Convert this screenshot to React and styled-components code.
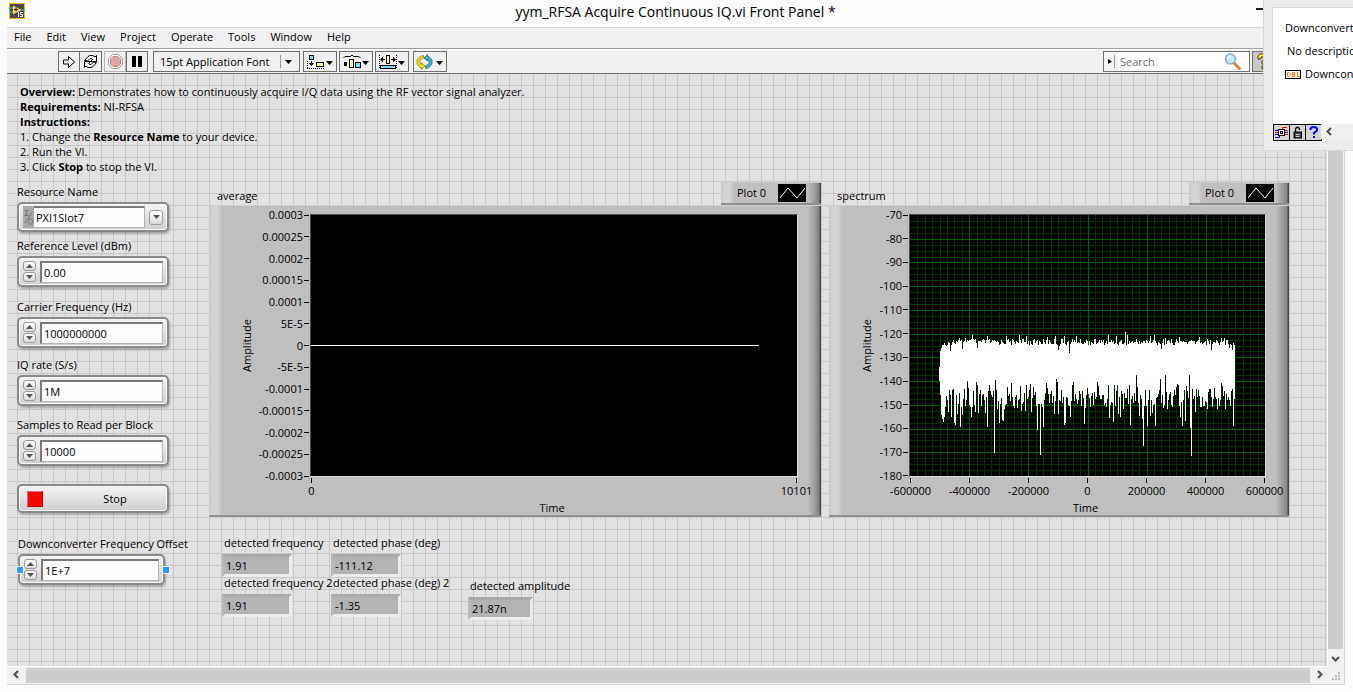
import React, { useState } from "react";
import styled, { createGlobalStyle, css } from "styled-components";

const GlobalStyle = createGlobalStyle`
  * { box-sizing: border-box; }
  body {
    margin: 0;
    background: #fbfbfb;
    color: #000;
    font-family: "Open Sans", "Noto Sans", sans-serif;
    font-size: 11px;
    line-height: 16px;
  }
  button, input, select { font: inherit; color: inherit; margin: 0; padding: 0; }
`;

const Page = styled.div`
  position: relative;
  display: flex;
  flex-direction: column;
  min-height: 100vh;
  overflow: hidden;
`;

const TitleBar = styled.header`
  display: flex;
  align-items: flex-start;
  height: 27px;
  padding: 3px 80px 0 9px;

  h1 {
    flex: 1;
    margin: 0;
    padding-left: 70px;
    text-align: center;
    font-size: 14px;
    line-height: 18px;
    font-weight: 400;
  }
`;

const MinimizeButton = styled.button`
  width: 17px;
  height: 7px;
  border: 0;
  border-bottom: 2px solid #1a1a1a;
  background: none;
`;

const Frame = styled.div`
  flex: 1;
  display: flex;
  flex-direction: column;
  margin: 0 8px 7px 7px;
  border: 1px solid #d5d5d5;
  border-left: 0;
`;

const MenuBar = styled.nav`
  display: flex;
  gap: 15px;
  height: 21px;
  padding: 1px 7px 0;
  background: #f0f0f0;
  border-bottom: 1px solid #a0a0a0;

  a { color: #000; text-decoration: none; }
`;

const ToolBar = styled.div`
  display: flex;
  height: 25px;
  padding: 1px 70px 1px 51px;
  border-top: 1px solid #fff;
  border-bottom: 1px solid #6a6a6a;
  background: #f0f0f0;
`;

const ToolButton = styled.button`
  display: flex;
  align-items: center;
  justify-content: center;
  width: ${(p) => p.$width || 22}px;
  height: 21px;
  margin-left: ${(p) => p.$gap || 0}px;
  border: 1px solid ${(p) => (p.disabled ? "#b4b4b4" : "#6f6f6f")};
  background: ${(p) => (p.$active ? "#c8c8c8" : "#f0f0f0")};

  & + &:not(:disabled) { border-left-width: ${(p) => (p.$gap ? 1 : 0)}px; }
`;

const FontPicker = styled.div`
  display: flex;
  align-items: center;
  width: 147px;
  height: 21px;
  margin-left: 5px;
  padding-left: 6px;
  border: 1px solid #6f6f6f;
  background: #f0f0f0;

  select {
    flex: 1;
    border: 0;
    appearance: none;
    background: none;
  }
  svg { margin-right: 5px; }
`;

const SearchBox = styled.div`
  display: flex;
  align-items: center;
  width: 147px;
  height: 21px;
  margin: 0 2px 0 auto;
  padding-right: 8px;
  border: 1px solid #6f6f6f;
  background: #fff;

  input {
    flex: 1;
    min-width: 0;
    border: 0;
    padding-left: 2px;
    background: none;
    outline: none;
  }
  input::placeholder { color: #6d6d6d; opacity: 1; }
`;

const ScrollArea = styled.div`
  flex: 1;
  display: flex;
`;

// 12px alignment grid of the front panel
const Panel = styled.main`
  flex: 1;
  min-width: 0;
  padding: 10px 38px 0 10px;
  border-right: 1px solid #fff;
  border-bottom: 1px solid #fff;
  background-color: #e2e2e2;
  background-image: linear-gradient(#c8c8c8 1px, transparent 1px),
    linear-gradient(to right, #c8c8c8 1px, transparent 1px);
  background-size: 12px 12px;
  background-position: 10px 11px;
`;

const VScroll = styled.div`
  display: flex;
  flex-direction: column;
  width: 16px;
  padding-right: 1px;
  background: #f0f0f0;
`;

const HScroll = styled.div`
  display: flex;
  height: 17px;
  background: #f0f0f0;
`;

const Thumb = styled.div`
  flex: 1;
  margin: ${(p) => (p.$vertical ? "17px 0 0" : "1px 0 1px")};
  background: #cdcdcd;
`;

const ScrollButton = styled.button`
  display: flex;
  align-items: center;
  justify-content: center;
  width: ${(p) => p.$width || 15}px;
  height: ${(p) => p.$height || 15}px;
  border: 0;
  background: #f0f0f0;
`;

const Overview = styled.section`
  padding-left: 3px;
  line-height: 15px;

  p, ol { margin: 0; padding: 0; }
  ol { list-style-position: inside; }
  li::marker { content: counter(list-item) ". "; }
`;

const MainRow = styled.div`
  display: flex;
  gap: 8px;
  margin-top: 8px;
`;

const Controls = styled.div`
  width: 184px;
  flex: none;
  padding-top: 2px;
`;

const Field = styled.div`
  margin-bottom: ${(p) => p.$space || 0}px;
  label { display: block; margin-bottom: 2px; white-space: nowrap; }
`;

const bevel = css`
  border: 2px solid #8a8a8a;
  border-radius: 5px;
  background: linear-gradient(#f4f4f4, #cfcfcf);
  box-shadow: inset 0 0 0 1px #f6f6f6, 1px 2px 2px rgba(0, 0, 0, 0.25);
`;

const Shell = styled.div`
  ${bevel}
  position: relative;
  display: flex;
  align-items: center;
  gap: 4px;
  width: ${(p) => p.$width || 152}px;
  height: ${(p) => p.$height || 31}px;
  padding: 0 4px;
`;

const entry = css`
  flex: 1;
  min-width: 0;
  height: 22px;
  padding: 0 2px;
  border: 1px solid #b4b4b4;
  border-top: 2px solid #7a7a7a;
  border-left: 2px solid #7a7a7a;
  border-radius: 0;
  background: #fcfcfc;
  outline: none;
`;

const Entry = styled.input`${entry}`;

const Resource = styled.div`
  display: flex;
  flex: 1;

  svg { flex: none; }
  select {
    ${entry}
    appearance: none;
    border-left-width: 0;
    border-left-style: none;
  }
`;

const Spinner = styled.div`
  display: flex;
  flex-direction: column;
  gap: 1px;
`;

const SmallButton = styled.button`
  display: flex;
  align-items: center;
  justify-content: center;
  width: ${(p) => p.$width || 13}px;
  height: ${(p) => p.$height || 10}px;
  border: 1px solid #9a9a9a;
  border-radius: 3px;
  background: linear-gradient(#fff, #dcdcdc);
`;

const StopButton = styled.button`
  ${bevel}
  display: flex;
  align-items: center;
  width: 152px;
  height: 29px;
  padding: 0 8px;
  text-align: center;

  i { width: 16px; height: 16px; background: #f00; border: 1px solid #c00000; border-top-color: #ff5c8a; border-left-color: #ff5c8a; }
  span { flex: 1; padding-left: 28px; }
`;

const Handle = styled.span`
  position: absolute;
  top: 10px;
  ${(p) => (p.$right ? "right: -7px;" : "left: -4px;")}
  width: 8px;
  height: 8px;
  border: 1px solid #fff;
  background: #3399ff;
`;

const Graph = styled.section`
  flex: ${(p) => p.$grow} 1 0;
  min-width: 0;
`;

const GraphHead = styled.div`
  display: flex;
  align-items: flex-end;
  justify-content: space-between;
  height: 23px;

  h2 { margin: 0; padding: 0 0 1px 8px; font-size: 11px; font-weight: 400; }
`;

const raised = css`
  border-top: 1px solid #d0d0d0;
  border-bottom: 2px solid #909090;
  background: linear-gradient(to right, #c8c8c8 0, #d4d4d4 3px, #d4d4d4 9px, #bfbfbf 13px, #bfbfbf calc(100% - 13px), #858585 calc(100% - 2px), #484848 calc(100% - 1px));
`;

const Legend = styled.div`
  ${raised}
  display: flex;
  align-items: center;
  justify-content: space-between;
  width: 100px;
  height: 23px;
  padding: 0 15px 0 16px;
`;

const GraphBody = styled.div`
  ${raised}
  display: grid;
  grid-template-columns: 16px ${(p) => p.$axis}px 1fr;
  height: 312px;
  padding: 8px 23px 0 30px;
`;

const Amplitude = styled.div`
  writing-mode: vertical-rl;
  transform: rotate(180deg);
  text-align: center;
`;

const YAxis = styled.div`
  display: flex;
  flex-direction: column;
  justify-content: space-between;
  margin: -7px 1px -7px 0;

  span { display: flex; align-items: center; justify-content: flex-end; gap: 1px; white-space: nowrap; }
  span::after { content: ""; width: 5px; height: 1px; background: #000; }
`;

const Plot = styled.div`
  height: 263px;
  border: 1px solid #ddd;
  border-top-color: #4d4d4d;
  border-left-color: #4d4d4d;
  background: #000;

  svg { display: block; width: 100%; height: 100%; }
`;

const XAxis = styled.div`
  grid-column: 3;
  display: flex;
  justify-content: space-between;
  padding: 1px 1px 0;
  height: 23px;

  span { display: flex; flex-direction: column; align-items: center; width: 1px; white-space: nowrap; }
  span::before { content: ""; flex: none; width: 1px; height: 5px; background: #000; }
`;

const TimeLabel = styled.div`
  grid-column: 3;
  padding-right: 4px;
  text-align: center;
`;

const BottomRow = styled.div`
  display: flex;
  margin-top: 18px;
`;

const OffsetCell = styled.div`
  flex: none;
  width: 205px;
  padding: 1px 0 0 1px;
`;

const Readouts = styled.div`
  display: flex;
  flex-direction: column;
  width: ${(p) => p.$width}px;
  padding-top: ${(p) => p.$drop || 0}px;
`;

const Readout = styled.div`
  margin-bottom: -2px;

  label { position: relative; display: block; padding-left: 2px; margin-bottom: 3px; white-space: nowrap; }
  output {
    display: block;
    width: ${(p) => p.$width || 70}px;
    height: 23px;
    padding: 1px;
    border: 3px solid #ececec;
    border-top-color: #aaa;
    border-left-color: #b8b8b8;
    background: #b3b3b3;
  }
`;

const HelpWindow = styled.aside`
  position: absolute;
  top: 0;
  right: 0;
  width: 90px;
  height: 151px;
  padding: 7px 0 8px 8px;
  overflow: hidden;
  border-left: 1px solid #d8d8d8;
  border-bottom: 1px solid #d8d8d8;
  background: #ebebeb;
  white-space: nowrap;
`;

const HelpBody = styled.div`
  height: 117px;
  padding: 12px 0 0 12px;
  border-top: 1px solid #d8d8d8;
  border-left: 1px solid #d8d8d8;
  background: #fff;

  p { display: flex; align-items: center; gap: 4px; margin: 0 0 7px; }
  p:nth-child(2) { padding-left: 2px; }
  svg { flex: none; }
`;

const HelpFoot = styled.div`
  display: flex;
  padding-left: 1px;
  background: #f0f0f0;
`;

const HelpButton = styled.button`
  display: flex;
  align-items: center;
  justify-content: center;
  width: 17px;
  height: 17px;
  margin-right: -1px;
  border: 1px solid #000;
  background: #d4d4d4;
`;

const Caret = ({ up, size = 7, color = "#000" }) => (
  <svg width={size} height="4" viewBox="0 0 7 4">
    <path d={up ? "M0 4h7L3.5 0z" : "M0 0h7L3.5 4z"} fill={color} />
  </svg>
);

const chevrons = { left: "M6 1L2.500 4.500L6 8", right: "M3 1l3.500 3.500L3 8", down: "M1 3l3.500 3.500L8 3", up: "M1 6l3.500-3.500L8 6" };
const Chevron = ({ dir }) => (
  <svg width="9" height="9" viewBox="0 0 9 9">
    <path d={chevrons[dir]} fill="none" stroke="#505050" strokeWidth="2" />
  </svg>
);

const AppIcon = () => (
  <svg width="16" height="16" viewBox="0 0 16 16">
    <rect width="16" height="16" fill="#f5b800" />
    <rect x="1" y="1" width="14" height="14" fill="#4a4a4a" />
    <path d="M0 5h5M0 9h5M11 7h5" stroke="#3c9bd8" strokeWidth="1.500" />
    <path d="M4 2.500v9L12.500 7z" fill="#ffd84a" />
    <path d="M5 6.500h4M7 4.500v4" stroke="#222" />
    <path d="M9.500 9v5M14 9.500h-2.500v2h2v2h-2.500" stroke="#fff" fill="none" />
  </svg>
);

const RunIcon = () => (
  <svg width="14" height="14" viewBox="0 0 14 14">
    <path d="M1.500 5v4H6.500v3.500L12.500 7L6.500 1.500V5z" fill="#fff" stroke="#000" />
  </svg>
);

const LoopIcon = () => (
  <svg width="17" height="15" viewBox="0 0 17 15">
    <path d="M2.500 6.500L6 2.500L8 1.500h3L13 3l1.500-1.500v6h-6L10.500 5.500L9 4.500H8L5.500 7z" fill="#fff" stroke="#000" />
    <path d="M14.500 8.500L11 12.500L9 13.500H6L4 12l-1.500 1.500v-6h6L6.500 9.500L8 10.500h1L11.500 8z" fill="#fff" stroke="#000" />
  </svg>
);

const AbortIcon = () => (
  <svg width="15" height="15" viewBox="0 0 15 15">
    <path d="M4.500.5h6l4 4v6l-4 4h-6l-4-4v-6z" fill="#fff" stroke="#a0a0a0" />
    <path d="M5 2.500h5L12.500 5v5L10 12.500H5L2.500 10V5z" fill="#dda5a5" stroke="#c08a8a" />
  </svg>
);

const PauseIcon = () => (
  <svg width="10" height="11" viewBox="0 0 10 11">
    <path d="M0 0h4v11H0zM6 0h4v11H6z" />
  </svg>
);

const AlignIcon = () => (
  <svg width="28" height="16" viewBox="0 0 28 16">
    <rect x="3.500" y="1.500" width="4" height="4" fill="#7fdcf5" stroke="#000" />
    <path d="M3 9h5l-2.500 3zM5 7h1v3H5z" />
    <rect x="10.500" y="8.500" width="7" height="4" fill="#fff3a0" stroke="#000" />
    <path d="M1 14.500h18M1.500 7v7" stroke="#000" strokeDasharray="1 1" fill="none" />
    <path d="M20 7h7l-3.500 4z" />
  </svg>
);

const DistributeIcon = () => (
  <svg width="28" height="16" viewBox="0 0 28 16">
    <path d="M1.500 4l1.500-1.500h5.500L10 1l1.500 1.500H17L18.500 4" fill="none" stroke="#000" />
    <rect x="2" y="8" width="3" height="4" />
    <rect x="7.500" y="5.500" width="4" height="8" fill="#fff3a0" stroke="#000" />
    <rect x="13.500" y="8.500" width="5" height="5" fill="#7fdcf5" stroke="#000" />
    <path d="M20 7h7l-3.500 4z" />
  </svg>
);

const ResizeIcon = () => (
  <svg width="28" height="16" viewBox="0 0 28 16">
    <path d="M1.500 1v14M18.500 1v14" stroke="#000" strokeDasharray="1 1" />
    <path d="M2 5.500l3-3v2.500h2v1H5v2.500zM18 5.500l-3-3v2.500h-2v1h2v2.500z" />
    <rect x="8.500" y="1.500" width="3" height="8" fill="#fff3a0" stroke="#000" />
    <rect x="2.500" y="11.500" width="15" height="3" fill="#7fdcf5" stroke="#000" />
    <path d="M20 7h7l-3.500 4z" />
  </svg>
);

const ReorderIcon = () => (
  <svg width="28" height="16" viewBox="0 0 28 16">
    <path d="M7.500 1.500L4 2.500L1 6v4l3 3.500h1.500v2L9 12L5.500 9v2L4 9V6l3.500-2z" fill="#f0e020" stroke="#8a8a00" strokeWidth=".8" />
    <path d="M9.500 14.500l3.500-1l3-3.500V6l-3-3.500h-1.500v-2L8 4l3.500 3V5L13 7v3l-3.500 2z" fill="#3fb4d0" stroke="#1c6f88" strokeWidth=".8" />
    <path d="M20 7h7l-3.500 4z" />
  </svg>
);

const MagnifierIcon = () => (
  <svg width="17" height="17" viewBox="0 0 17 17">
    <path d="M10.500 10.500l5 5" stroke="#c98a4b" strokeWidth="3" strokeLinecap="round" />
    <circle cx="6.500" cy="6" r="5" fill="#c4e8fa" stroke="#8aa8bc" strokeWidth="1.500" />
    <path d="M3.500 5.500a3 3 0 0 1 3-2.500" stroke="#fff" strokeWidth="1.500" fill="none" />
  </svg>
);

const HelpIcon = () => (
  <svg width="14" height="17" viewBox="0 0 14 17">
    <path d="M2 6V3l2-2h6l2 2v4l-3 2v2H6V8l3-2V4H5v2zM6 13h3v3H6z" fill="#ffee20" stroke="#000" strokeWidth=".7" />
  </svg>
);

const IoGlyph = () => (
  <svg width="11" height="22" viewBox="0 0 11 22">
    <rect width="11" height="22" fill="#a9a9a9" />
    <path d="M1.500 4.500h4M3.500 4.500v5M1.500 9.500h4M9.500 6L2 17" stroke="#747474" fill="none" />
    <ellipse cx="7.500" cy="15.500" rx="2" ry="3" stroke="#747474" fill="none" />
  </svg>
);

const DblIcon = () => (
  <svg width="16" height="9" viewBox="0 0 16 9">
    <rect x=".5" y=".5" width="15" height="8" fill="#fff" stroke="#000" />
    <path d="M2.500 2.500h1.500l1 1v2l-1 1h-1.500zM7.500 2.500h2v4h-2zM7.500 4.500h2.500M12.500 2v4.500H15" fill="none" stroke="#ff8000" />
  </svg>
);

const WireIcon = () => (
  <svg width="15" height="13" viewBox="0 0 15 13">
    <path d="M1 4.500h4M1 8.500h4M1 11.500h4.500V9M10 6.500h4" stroke="#00f" fill="none" />
    <path d="M13 1.500H8.500V4M10 4.500h4M10 8.500h4M1 6.500h3" stroke="#e00" fill="none" />
    <rect x="4.500" y="3.500" width="6" height="6" fill="#fff" stroke="#000" />
    <rect x="6.500" y="5.500" width="2" height="2" fill="none" stroke="#000" />
  </svg>
);

const LockIcon = () => (
  <svg width="11" height="13" viewBox="0 0 11 13">
    <path d="M3.500 6V3l1-1.500h2L7.500 3v1" stroke="#000" fill="none" strokeWidth="1.300" />
    <rect x="2" y="6" width="7.500" height="6" fill="#444" stroke="#000" />
    <path d="M4 8.500h3.500M4 10.500h3.500" stroke="#ccc" />
  </svg>
);

const QuestionIcon = () => (
  <svg width="10" height="13" viewBox="0 0 10 13">
    <path d="M1.500 4V2.500L3 1.200h3.500L8 2.500v2L5 7v1.500M5 10v2" stroke="#00f" strokeWidth="2" fill="none" />
  </svg>
);

const PlotThumb = () => (
  <svg width="28" height="18" viewBox="0 0 28 18">
    <rect width="28" height="18" fill="#000" />
    <path d="M2 14l8-10l9 10l8-10" fill="none" stroke="#fff" />
  </svg>
);

// spectrum trace, one column per pixel; named columns carry the deep nulls and the gaps
const W = 355;
const H = 261;
const lows = {
  31: 200, 32: 204, 33: 207, 34: 202, 38: 197, 41: 202, 44: 208, 45: 210, 47: 199, 50: 212, 52: 200, 55: 191, 61: 202, 62: 192,
  65: 197, 68: 198, 75: 198, 77: 212, 84: 238, 87: 194, 89: 208, 92: 205, 93: 206, 94: 194, 104: 193, 107: 193, 111: 196, 115: 196,
  121: 197, 127: 215, 130: 240, 133: 212, 144: 199, 148: 199, 154: 210, 155: 208, 160: 202, 174: 209, 175: 193, 194: 190, 199: 203,
  203: 207, 208: 199, 210: 202, 213: 194, 220: 210, 229: 201, 232: 204, 233: 231, 237: 211, 240: 201, 242: 198, 245: 211, 253: 193,
  257: 194, 270: 202, 272: 211, 275: 206, 280: 213, 281: 241, 285: 197, 290: 192, 297: 194, 307: 194, 315: 194, 323: 211,
};
const gaps = {
  57: 166, 58: 173, 66: 167, 67: 170, 79: 170, 80: 176, 85: 165, 86: 175, 97: 172, 101: 168, 110: 171, 116: 170, 120: 169, 123: 172,
  136: 168, 137: 173, 146: 164, 147: 167, 162: 170, 163: 167, 177: 173, 187: 167, 188: 171, 198: 170, 204: 170, 207: 170, 219: 170,
  226: 160, 227: 172, 249: 175, 250: 164, 255: 160, 266: 172, 267: 169, 268: 170, 276: 171, 279: 160, 282: 174, 299: 174, 304: 173, 311: 168, 312: 171,
};
const peaks = { 39: 128, 49: 123, 55: 123, 62: 120, 77: 121, 96: 121, 109: 120, 116: 121, 137: 122, 145: 121, 154: 121, 166: 121, 198: 120, 206: 121, 215: 117, 217: 120, 240: 121, 244: 120, 255: 123, 269: 122, 289: 122, 311: 123, 314: 123 };
const dips = { 40: 136, 52: 134, 67: 133, 148: 135, 149: 131, 159: 138, 251: 134, 301: 135, 319: 133, 322: 135 };

const noise = (n) => {
  const v = Math.sin(n * 12.9898) * 43758.5453;
  return v - Math.floor(v);
};

const buildTrace = () => {
  let d = "";
  for (let x = 29; x < 325; x++) {
    const edge = Math.max(0, 38 - x) + Math.max(0, x - 320);
    let top = peaks[x] || dips[x] || Math.round(124 + noise(x) * 6 + edge * 0.7);
    let bottom = lows[x] || gaps[x] || Math.round(174 + noise(x + 500) * 18);
    if (x === 29) { top = 152; bottom = 166; }
    d += `M${x}.5 ${top}V${bottom}`;
  }
  return d;
};
const trace = buildTrace();

const gridPath = (major) => {
  let d = "";
  for (let i = 1; i < 48; i++) {
    if ((i % 8 === 0) === major) d += `M${Math.round((i * W) / 48)}.5 0V${H}`;
  }
  for (let i = 1; i < 44; i++) {
    if ((i % 4 === 0) === major) d += `M0 ${Math.round((i * H) / 44)}.5H${W}`;
  }
  return d;
};

const AveragePlot = () => (
  <svg viewBox="0 0 486 261" preserveAspectRatio="none" shapeRendering="crispEdges">
    <path d="M0 130.500H448" stroke="#fff" />
  </svg>
);

const SpectrumPlot = () => (
  <svg viewBox={`0 0 ${W} ${H}`} preserveAspectRatio="none" shapeRendering="crispEdges">
    <path d={gridPath(false)} stroke="#003300" />
    <path d={gridPath(true)} stroke="#006400" />
    <path d={trace} stroke="#fff" />
  </svg>
);

const menus = ["File", "Edit", "View", "Project", "Operate", "Tools", "Window", "Help"];

const averageTicks = ["0.0003", "0.00025", "0.0002", "0.00015", "0.0001", "5E-5", "0", "-5E-5", "-0.0001", "-0.00015", "-0.0002", "-0.00025", "-0.0003"];
const spectrumTicks = ["-70", "-80", "-90", "-100", "-110", "-120", "-130", "-140", "-150", "-160", "-170", "-180"];
const freqTicks = ["-600000", "-400000", "-200000", "0", "200000", "400000", "600000"];

const fields = [
  { id: "ref", label: "Reference Level (dBm)", value: "0.00", space: 12 },
  { id: "carrier", label: "Carrier Frequency (Hz)", value: "1000000000", space: 9 },
  { id: "iq", label: "IQ rate (S/s)", value: "1M", space: 11 },
  { id: "samples", label: "Samples to Read per Block", value: "10000", space: 18 },
];

function NumericField({ id, label, value, space, width, selected }) {
  const [text, setText] = useState(value);
  return (
    <Field $space={space}>
      <label htmlFor={id}>{label}</label>
      <Shell $width={width}>
        {selected && <Handle />}
        <Spinner>
          <SmallButton aria-label={`Increase ${label}`}><Caret up color="#555" /></SmallButton>
          <SmallButton aria-label={`Decrease ${label}`}><Caret color="#555" /></SmallButton>
        </Spinner>
        <Entry id={id} type="text" value={text} onChange={(e) => setText(e.target.value)} />
        {selected && <Handle $right />}
      </Shell>
    </Field>
  );
}

function GraphPanel({ title, grow, axis, yTicks, xTicks, children }) {
  return (
    <Graph $grow={grow}>
      <GraphHead>
        <h2>{title}</h2>
        <Legend>Plot 0 <PlotThumb /></Legend>
      </GraphHead>
      <GraphBody $axis={axis}>
        <Amplitude>Amplitude</Amplitude>
        <YAxis>{yTicks.map((t) => <span key={t}>{t}</span>)}</YAxis>
        <Plot>{children}</Plot>
        <XAxis>{xTicks.map((t) => <span key={t}>{t}</span>)}</XAxis>
        <TimeLabel>Time</TimeLabel>
      </GraphBody>
    </Graph>
  );
}

function Indicator({ id, label, value, width }) {
  return (
    <Readout $width={width}>
      <label htmlFor={id}>{label}</label>
      <output id={id}>{value}</output>
    </Readout>
  );
}

export default function App() {
  return (
    <Page>
      <GlobalStyle />
      <TitleBar>
        <AppIcon />
        <h1>yym_RFSA Acquire Continuous IQ.vi Front Panel *</h1>
        <MinimizeButton aria-label="Minimize" />
      </TitleBar>

      <Frame>
        <MenuBar>
          {menus.map((m) => <a key={m} href="#">{m}</a>)}
        </MenuBar>
        <ToolBar>
          <ToolButton aria-label="Run"><RunIcon /></ToolButton>
          <ToolButton aria-label="Run continuously"><LoopIcon /></ToolButton>
          <ToolButton aria-label="Abort" $gap={2} disabled><AbortIcon /></ToolButton>
          <ToolButton aria-label="Pause"><PauseIcon /></ToolButton>
          <FontPicker>
            <select aria-label="Font" defaultValue="15">
              <option value="15">15pt Application Font</option>
            </select>
            <svg width="14" height="15" viewBox="0 0 14 15">
              <path d="M.5 1v13" stroke="#9a9a9a" />
              <path d="M5 6h7l-3.500 4z" />
            </svg>
          </FontPicker>
          <ToolButton aria-label="Align objects" $width={34} $gap={3}><AlignIcon /></ToolButton>
          <ToolButton aria-label="Distribute objects" $width={34} $gap={2}><DistributeIcon /></ToolButton>
          <ToolButton aria-label="Resize objects" $width={34} $gap={2}><ResizeIcon /></ToolButton>
          <ToolButton aria-label="Reorder" $width={34} $gap={4}><ReorderIcon /></ToolButton>
          <SearchBox>
            <svg width="14" height="19" viewBox="0 0 14 19">
              <rect width="14" height="19" fill="#f4f4f4" />
              <path d="M4 7v5l4-2.500z" />
              <path d="M10.500 3v13" stroke="#9a9a9a" />
            </svg>
            <input type="text" aria-label="Search" placeholder="Search" />
            <MagnifierIcon />
          </SearchBox>
          <ToolButton aria-label="Context help" $active><HelpIcon /></ToolButton>
        </ToolBar>

        <ScrollArea>
          <Panel>
            <Overview>
              <p><b>Overview:</b> Demonstrates how to continuously acquire I/Q data using the RF vector signal analyzer.</p>
              <p><b>Requirements:</b> NI-RFSA</p>
              <p><b>Instructions:</b></p>
              <ol>
                <li>Change the <b>Resource Name</b> to your device.</li>
                <li>Run the VI.</li>
                <li>Click <b>Stop</b> to stop the VI.</li>
              </ol>
            </Overview>

            <MainRow>
              <Controls>
                <Field $space={6}>
                  <label htmlFor="resource">Resource Name</label>
                  <Shell $height={30}>
                    <Resource>
                      <IoGlyph />
                      <select id="resource" defaultValue="PXI1Slot7">
                        <option>PXI1Slot7</option>
                      </select>
                    </Resource>
                    <SmallButton aria-label="Browse resources" $width={14} $height={15}><Caret color="#555" /></SmallButton>
                  </Shell>
                </Field>
                {fields.map((f) => <NumericField key={f.id} {...f} />)}
                <StopButton><i /><span>Stop</span></StopButton>
              </Controls>

              <GraphPanel title="average" grow={612} axis={55} yTicks={averageTicks} xTicks={["0", "10101"]}>
                <AveragePlot />
              </GraphPanel>
              <GraphPanel title="spectrum" grow={460} axis={34} yTicks={spectrumTicks} xTicks={freqTicks}>
                <SpectrumPlot />
              </GraphPanel>
            </MainRow>

            <BottomRow>
              <OffsetCell>
                <NumericField id="offset" label="Downconverter Frequency Offset" value="1E+7" width={147} selected />
              </OffsetCell>
              <Readouts $width={109}>
                <Indicator id="freq1" label="detected frequency" value="1.91" />
                <Indicator id="freq2" label="detected frequency 2" value="1.91" />
              </Readouts>
              <Readouts $width={137}>
                <Indicator id="phase1" label="detected phase (deg)" value="-111.12" />
                <Indicator id="phase2" label="detected phase (deg) 2" value="-1.35" />
              </Readouts>
              <Readouts $width={120} $drop={43}>
                <Indicator id="amp" label="detected amplitude" value="21.87n" width={65} />
              </Readouts>
            </BottomRow>
          </Panel>
          <VScroll>
            <Thumb $vertical />
            <ScrollButton aria-label="Scroll down" $height={18}><Chevron dir="down" /></ScrollButton>
          </VScroll>
        </ScrollArea>
        <HScroll>
          <ScrollButton aria-label="Scroll left" $width={19}><Chevron dir="left" /></ScrollButton>
          <Thumb />
          <ScrollButton aria-label="Scroll right" $width={18}><Chevron dir="right" /></ScrollButton>
          <svg width="16" height="16" viewBox="0 0 16 16">
            <path d="M10 5h2v2h-2zM7 8h2v2H7zM10 8h2v2h-2zM4 11h2v2H4zM7 11h2v2H7zM10 11h2v2h-2z" fill="#bdbdbd" />
          </svg>
        </HScroll>
      </Frame>

      <HelpWindow>
        <HelpBody>
          <p>Downconverter Frequency Offset</p>
          <p>No description available.</p>
          <p><DblIcon /> Downconverter Frequency Offset</p>
        </HelpBody>
        <HelpFoot>
          <HelpButton aria-label="Show optional terminals"><WireIcon /></HelpButton>
          <HelpButton aria-label="Lock"><LockIcon /></HelpButton>
          <HelpButton aria-label="More help"><QuestionIcon /></HelpButton>
          <ScrollButton aria-label="Scroll help left" $width={17}><Chevron dir="left" /></ScrollButton>
        </HelpFoot>
      </HelpWindow>
    </Page>
  );
}
